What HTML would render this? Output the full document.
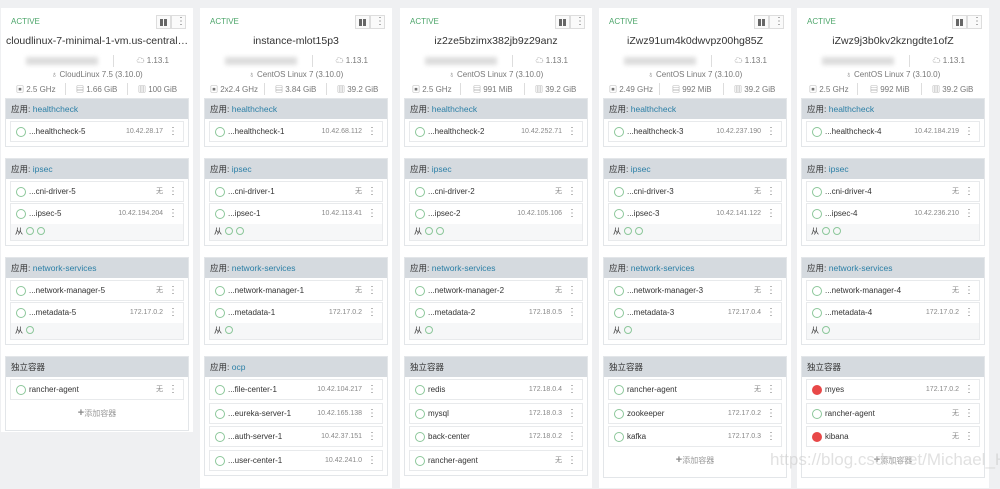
<!DOCTYPE html>
<html><head><meta charset="utf-8"><style>
*{box-sizing:border-box;margin:0;padding:0}
body{width:1000px;height:474px;overflow:hidden;background:#eff0f2;font-family:"Liberation Sans","Noto Sans CJK SC",sans-serif;color:#333;position:relative}
.c{position:absolute;top:8px;width:192px;background:#fff;padding-bottom:6px}
.act{position:absolute;left:10px;top:9px;font-size:8px;color:#4ca56a}
.btn{position:absolute;top:7px;width:15px;height:14px;border:1px solid #ddd;background:#fafafa}
.b1{right:22px}.b2{right:7px}
.b1:before,.b1:after{content:"";position:absolute;top:3px;width:3px;height:7px;background:#666}
.b1:before{left:3px}.b1:after{left:7px}
.b2:after{content:"⋮";position:absolute;left:4px;top:0;font-size:10px;line-height:12px;color:#666}
.t{position:absolute;top:27px;left:0;right:0;text-align:center;font-size:10.5px;color:#333;white-space:nowrap;overflow:hidden}
.ip{position:absolute;top:49px;left:25px;width:72px;height:8px;background:#ddd;filter:blur(2px)}
.sep{position:absolute;width:1px;height:12px;background:#ddd}
.ver{position:absolute;top:47px;right:24px;font-size:8px;color:#777}
.os{position:absolute;top:62px;left:0;right:0;text-align:center;font-size:8px;color:#777}
.sp{position:absolute;top:76px;font-size:8px;color:#777}
.secs{position:absolute;top:90px;left:4px;right:4px}
.s{border:1px solid #e3e6e9;margin-bottom:11px;padding-bottom:4px}
.sh{height:20px;line-height:20px;background:#d5dadf;font-size:8.5px;padding-left:5px;color:#333;overflow:hidden}
.sh b{font-weight:normal;color:#2b7fa6}
.r{margin:2px 4px 0;border:1px solid #e8eaec;height:21px;line-height:19px;font-size:8px;position:relative;padding-left:18px;color:#333;overflow:hidden}
.r+.r{margin-top:1px}
.s4 .r+.r{margin-top:2.5px}
.r:before{content:"";position:absolute;left:5px;top:5px;width:8px;height:8px;border:1px solid #8cc79a;border-radius:50%}
.r.red:before{background:#e84848;border-color:#e84848}
.r i{font-style:normal;position:absolute;right:20px;top:0;font-size:7px;color:#888}
.r:after{content:"⋮";position:absolute;right:5px;top:0;font-size:10px;color:#777}
.r.k{height:38px;background:linear-gradient(#fff 20px,#f6f7f8 20px)}
.cong{position:absolute;left:4px;top:20px;font-size:8px;color:#333;line-height:15px}
.cong span{display:inline-block;width:8px;height:8px;border:1px solid #8cc79a;border-radius:50%;margin-left:3px;vertical-align:-1px}
.add{text-align:center;font-size:8px;color:#999;height:26px;line-height:26px}
.add b{font-size:11px;color:#888}
</style></head><body>

<div class="c" style="left:1px;height:424px">
<div class="act">ACTIVE</div><div class="btn b1"></div><div class="btn b2"></div>
<div class="t" style="text-align:left;left:5px;right:4px;text-overflow:ellipsis">cloudlinux-7-minimal-1-vm.us-central1-...</div>
<div class="ip"></div><div class="sep" style="left:112px;top:47px"></div><div class="ver">☁ 1.13.1</div>
<div class="os">♁ CloudLinux 7.5 (3.10.0)</div>
<div class="sp" style="left:15px">▣ 2.5 GHz</div><div class="sep" style="left:64px;top:75px"></div><div class="sp" style="left:75px">▤ 1.66 GiB</div><div class="sep" style="left:126px;top:75px"></div><div class="sp" style="left:137px">▥ 100 GiB</div>
<div class="secs">
<div class="s"><div class="sh">应用: <b>healthcheck</b></div><div class="r">...healthcheck-5<i>10.42.28.17</i></div></div>
<div class="s"><div class="sh">应用: <b>ipsec</b></div><div class="r">...cni-driver-5<i>无</i></div><div class="r k">...ipsec-5<i>10.42.194.204</i><div class="cong">从<span></span><span></span></div></div></div>
<div class="s"><div class="sh">应用: <b>network-services</b></div><div class="r">...network-manager-5<i>无</i></div><div class="r k">...metadata-5<i>172.17.0.2</i><div class="cong">从<span></span></div></div></div>
<div class="s s4"><div class="sh">独立容器</div><div class="r">rancher-agent<i>无</i></div><div class="add"><b>+</b>添加容器</div></div>
</div></div>

<div class="c" style="left:200px;height:480px">
<div class="act">ACTIVE</div><div class="btn b1"></div><div class="btn b2"></div>
<div class="t">instance-mlot15p3</div>
<div class="ip"></div><div class="sep" style="left:112px;top:47px"></div><div class="ver">☁ 1.13.1</div>
<div class="os">♁ CentOS Linux 7 (3.10.0)</div>
<div class="sp" style="left:10px">▣ 2x2.4 GHz</div><div class="sep" style="left:64px;top:75px"></div><div class="sp" style="left:75px">▤ 3.84 GiB</div><div class="sep" style="left:126px;top:75px"></div><div class="sp" style="left:137px">▥ 39.2 GiB</div>
<div class="secs">
<div class="s"><div class="sh">应用: <b>healthcheck</b></div><div class="r">...healthcheck-1<i>10.42.68.112</i></div></div>
<div class="s"><div class="sh">应用: <b>ipsec</b></div><div class="r">...cni-driver-1<i>无</i></div><div class="r k">...ipsec-1<i>10.42.113.41</i><div class="cong">从<span></span><span></span></div></div></div>
<div class="s"><div class="sh">应用: <b>network-services</b></div><div class="r">...network-manager-1<i>无</i></div><div class="r k">...metadata-1<i>172.17.0.2</i><div class="cong">从<span></span></div></div></div>
<div class="s s4"><div class="sh">应用: <b>ocp</b></div><div class="r">...file-center-1<i>10.42.104.217</i></div><div class="r">...eureka-server-1<i>10.42.165.138</i></div><div class="r">...auth-server-1<i>10.42.37.151</i></div><div class="r">...user-center-1<i>10.42.241.0</i></div></div>
</div></div>

<div class="c" style="left:400px;height:480px">
<div class="act">ACTIVE</div><div class="btn b1"></div><div class="btn b2"></div>
<div class="t">iz2ze5bzimx382jb9z29anz</div>
<div class="ip"></div><div class="sep" style="left:112px;top:47px"></div><div class="ver">☁ 1.13.1</div>
<div class="os">♁ CentOS Linux 7 (3.10.0)</div>
<div class="sp" style="left:12px">▣ 2.5 GHz</div><div class="sep" style="left:60px;top:75px"></div><div class="sp" style="left:73px">▤ 991 MiB</div><div class="sep" style="left:124px;top:75px"></div><div class="sp" style="left:135px">▥ 39.2 GiB</div>
<div class="secs">
<div class="s"><div class="sh">应用: <b>healthcheck</b></div><div class="r">...healthcheck-2<i>10.42.252.71</i></div></div>
<div class="s"><div class="sh">应用: <b>ipsec</b></div><div class="r">...cni-driver-2<i>无</i></div><div class="r k">...ipsec-2<i>10.42.105.106</i><div class="cong">从<span></span><span></span></div></div></div>
<div class="s"><div class="sh">应用: <b>network-services</b></div><div class="r">...network-manager-2<i>无</i></div><div class="r k">...metadata-2<i>172.18.0.5</i><div class="cong">从<span></span></div></div></div>
<div class="s s4"><div class="sh">独立容器</div><div class="r">redis<i>172.18.0.4</i></div><div class="r">mysql<i>172.18.0.3</i></div><div class="r">back-center<i>172.18.0.2</i></div><div class="r">rancher-agent<i>无</i></div></div>
</div></div>

<div class="c" style="left:599px;height:480px">
<div class="act">ACTIVE</div><div class="btn b1"></div><div class="btn b2"></div>
<div class="t">iZwz91um4k0dwvpz00hg85Z</div>
<div class="ip"></div><div class="sep" style="left:112px;top:47px"></div><div class="ver">☁ 1.13.1</div>
<div class="os">♁ CentOS Linux 7 (3.10.0)</div>
<div class="sp" style="left:10px">▣ 2.49 GHz</div><div class="sep" style="left:60px;top:75px"></div><div class="sp" style="left:73px">▤ 992 MiB</div><div class="sep" style="left:124px;top:75px"></div><div class="sp" style="left:135px">▥ 39.2 GiB</div>
<div class="secs">
<div class="s"><div class="sh">应用: <b>healthcheck</b></div><div class="r">...healthcheck-3<i>10.42.237.190</i></div></div>
<div class="s"><div class="sh">应用: <b>ipsec</b></div><div class="r">...cni-driver-3<i>无</i></div><div class="r k">...ipsec-3<i>10.42.141.122</i><div class="cong">从<span></span><span></span></div></div></div>
<div class="s"><div class="sh">应用: <b>network-services</b></div><div class="r">...network-manager-3<i>无</i></div><div class="r k">...metadata-3<i>172.17.0.4</i><div class="cong">从<span></span></div></div></div>
<div class="s s4"><div class="sh">独立容器</div><div class="r">rancher-agent<i>无</i></div><div class="r">zookeeper<i>172.17.0.2</i></div><div class="r">kafka<i>172.17.0.3</i></div><div class="add"><b>+</b>添加容器</div></div>
</div></div>

<div class="c" style="left:797px;height:480px">
<div class="act">ACTIVE</div><div class="btn b1"></div><div class="btn b2"></div>
<div class="t">iZwz9j3b0kv2kzngdte1ofZ</div>
<div class="ip"></div><div class="sep" style="left:112px;top:47px"></div><div class="ver">☁ 1.13.1</div>
<div class="os">♁ CentOS Linux 7 (3.10.0)</div>
<div class="sp" style="left:12px">▣ 2.5 GHz</div><div class="sep" style="left:60px;top:75px"></div><div class="sp" style="left:73px">▤ 992 MiB</div><div class="sep" style="left:124px;top:75px"></div><div class="sp" style="left:135px">▥ 39.2 GiB</div>
<div class="secs">
<div class="s"><div class="sh">应用: <b>healthcheck</b></div><div class="r">...healthcheck-4<i>10.42.184.219</i></div></div>
<div class="s"><div class="sh">应用: <b>ipsec</b></div><div class="r">...cni-driver-4<i>无</i></div><div class="r k">...ipsec-4<i>10.42.236.210</i><div class="cong">从<span></span><span></span></div></div></div>
<div class="s"><div class="sh">应用: <b>network-services</b></div><div class="r">...network-manager-4<i>无</i></div><div class="r k">...metadata-4<i>172.17.0.2</i><div class="cong">从<span></span></div></div></div>
<div class="s s4"><div class="sh">独立容器</div><div class="r red">myes<i>172.17.0.2</i></div><div class="r">rancher-agent<i>无</i></div><div class="r red">kibana<i>无</i></div><div class="add"><b>+</b>添加容器</div></div>
</div></div>

<div style="position:absolute;left:770px;top:450px;font-size:17px;color:rgba(200,200,200,.55);white-space:nowrap">https://blog.csdn.net/Michael_HM</div>
</body></html>
